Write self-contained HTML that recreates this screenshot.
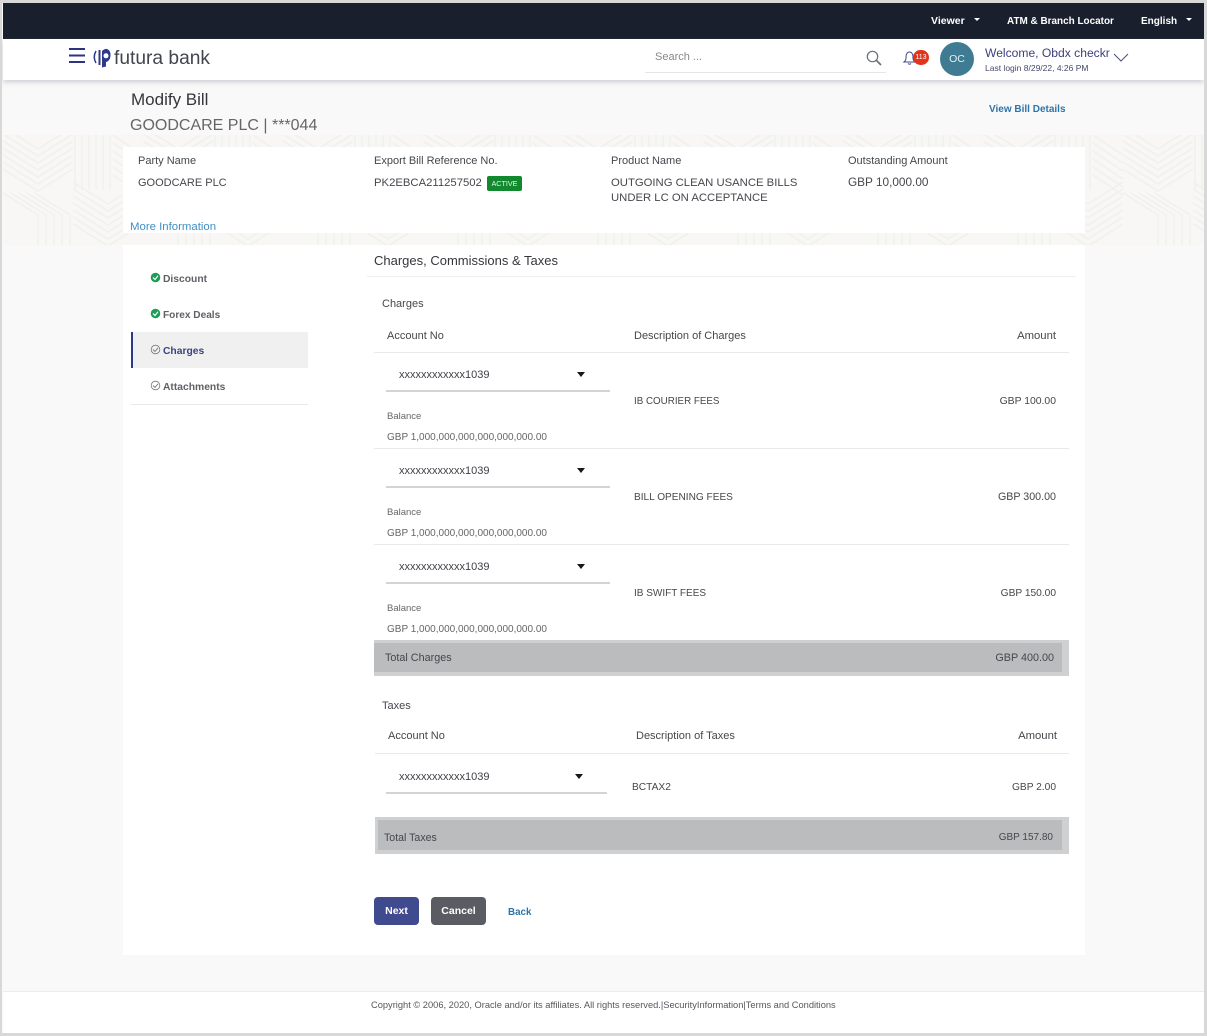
<!DOCTYPE html>
<html><head><meta charset="utf-8"><style>
html,body{margin:0;padding:0}
body{width:1207px;height:1036px;position:relative;overflow:hidden;background:#fff;font-family:"Liberation Sans",sans-serif;color:#3f4147}
.a{position:absolute}
.t{position:absolute;white-space:nowrap;font-size:11px;line-height:14px;color:#45474c}
.r{text-align:right}
.l{position:absolute;height:1px;background:#e9e9e9}
.u{position:absolute;height:2px;background:#d4d4d4}
.c{position:absolute;width:0;height:0;border-left:4.5px solid transparent;border-right:4.5px solid transparent;border-top:5px solid #16181d}
.w{position:absolute;width:0;height:0;border-left:3.5px solid transparent;border-right:3.5px solid transparent;border-top:3.5px solid #fff}
.v{font-size:10.2px}
</style></head><body>
<div class="a" style="left:0;top:0;width:1207px;height:1036px;background:#f9f9f9"></div>
<svg class="a" style="left:3px;top:135px" width="1201" height="110"><defs><pattern id="p" width="140" height="110" patternUnits="userSpaceOnUse"><rect width="140" height="110" fill="#f8f7f5"/><g fill="none" stroke="#f1f0ed" stroke-width="1.500"><path d="M0 -8L35 14L70 -8M0 -1L35 21L70 -1M0 6L35 28L70 6M0 13L35 35L70 13M0 20L35 42L70 20M0 27L35 49L70 27M0 34L35 56L70 34"/><path d="M72 0V55M79 0V55M86 0V55M93 0V55M100 0V55M107 0V55"/><path d="M110 0L140 20M110 8L140 28M110 16L140 36M110 24L140 44M110 32L140 52M110 40L140 60"/><path d="M0 58L35 80V110M8 58L43 80V110M16 58L51 80V110M24 58L59 80V110M32 58L67 80V110"/><path d="M70 47L105 69L140 47M70 54L105 76L140 54M70 61L105 83L140 61M70 68L105 90L140 68M70 75L105 97L140 75M70 82L105 104L140 82M70 89L105 111L140 89"/></g></pattern></defs><rect width="1201" height="110" fill="url(#p)"/></svg>
<div class="a" style="left:123px;top:147px;width:962px;height:86px;background:#fff"></div>
<div class="a" style="left:123px;top:245px;width:962px;height:710px;background:#fff"></div>
<div class="a" style="left:3px;top:991px;width:1201px;height:42px;background:#fff;border-top:1px solid #ececec;box-sizing:border-box"></div>
<div class="a" style="left:3px;top:3px;width:1201px;height:36px;background:#1a1f2e"></div>
<div class="a" style="left:3px;top:39px;width:1201px;height:41px;background:#fff;box-shadow:0 2px 5px rgba(120,120,140,.35)"></div>
<div class="a" style="left:0;top:0;width:1207px;height:1036px;box-sizing:border-box;border:3px solid #d8d8d8;border-width:3px 3px 3px 2.5px"></div>

<span class="t" style="left:931px;top:14px;color:#fff;font-weight:bold;font-size:10.5px">Viewer</span><i class="w" style="left:974px;top:18px"></i>
<span class="t" style="left:1007px;top:15px;color:#fff;font-weight:bold;font-size:9.95px">ATM &amp; Branch Locator</span>
<span class="t" style="left:1141px;top:15px;color:#fff;font-weight:bold;font-size:10px">English</span><i class="w" style="left:1186px;top:18px"></i>

<svg class="a" style="left:68px;top:47px" width="18" height="18"><path d="M1 2H17M1 8.500H17M1 15H17" stroke="#2d3383" stroke-width="2"/></svg>
<svg class="a" style="left:92px;top:47px" width="22" height="22"><path d="M4 4Q0.500 10 4 16" fill="none" stroke="#2d3a8c" stroke-width="1.500"/><path d="M7.500 3V18" stroke="#2d3a8c" stroke-width="2"/><path d="M10 4Q13 1.500 15 2Q19 3.500 18.500 9Q18 14 14 15V19.500L10 20.500Z" fill="#2d3a8c"/><circle cx="14" cy="8.800" r="2.500" fill="#fff"/></svg>
<span class="t" style="left:114px;top:47px;font-size:19.2px;line-height:24px;color:#42454e">futura bank</span>
<span class="t" style="left:655px;top:50px;color:#888">Search ...</span>
<div class="l" style="left:645px;top:72px;width:241px;background:#e6e6e6"></div>
<svg class="a" style="left:865px;top:49px" width="18" height="18"><circle cx="7.500" cy="7.500" r="5.200" fill="none" stroke="#666e78" stroke-width="1.200"/><path d="M11.500 11.500L16 16" stroke="#666e78" stroke-width="1.600"/></svg>
<svg class="a" style="left:902px;top:50px" width="14" height="16"><path d="M2 12Q4.500 10 4 6.500Q4.500 2 7.500 2Q10.500 2 11 6.500Q10.500 10 13 12Z" fill="none" stroke="#3d4a8a" stroke-width="1"/><path d="M6 13.500Q7.500 15 9 13.500" fill="none" stroke="#3d4a8a"/></svg>
<div class="a" style="left:913px;top:50px;width:16px;height:15px;border-radius:8px;background:#e0341c;color:#fff;font-size:7px;line-height:15px;text-align:center">113</div>
<div class="a" style="left:940px;top:42px;width:34px;height:34px;border-radius:50%;background:#3f7c93;color:#e8f0f3;font-size:10.500px;line-height:35px;text-align:center">OC</div>
<span class="t" style="left:985px;top:45px;font-size:12.1px;line-height:16px;color:#3c3f7a">Welcome, Obdx checkr</span>
<span class="t" style="left:985px;top:62px;font-size:8.500px;line-height:12px;color:#44476e">Last login 8/29/22, 4:26 PM</span>
<svg class="a" style="left:1113px;top:52px" width="16" height="11"><path d="M1 2L8 9L15 2" fill="none" stroke="#4a5080" stroke-width="1"/></svg>

<span class="t" style="left:131px;top:89px;font-size:17px;line-height:22px;color:#34363b">Modify Bill</span>
<span class="t" style="left:130px;top:115px;font-size:16px;line-height:22px;color:#666">GOODCARE PLC | ***044</span>
<span class="t" style="left:989px;top:103px;font-size:10px;font-weight:bold;color:#2f74a8">View Bill Details</span>

<span class="t" style="left:138px;top:154px">Party Name</span>
<span class="t" style="left:138px;top:176px">GOODCARE PLC</span>
<span class="t" style="left:374px;top:154px">Export Bill Reference No.</span>
<span class="t" style="left:374px;top:176px;font-size:11.3px">PK2EBCA211257502</span>
<div class="a" style="left:487px;top:176px;width:35px;height:15px;background:#12892f;border-radius:2px;color:#e6f5e9;font-size:7.200px;line-height:15px;text-align:center">ACTIVE</div>
<span class="t" style="left:611px;top:154px">Product Name</span>
<span class="t" style="left:611px;top:176px;font-size:11.3px">OUTGOING CLEAN USANCE BILLS</span>
<span class="t" style="left:611px;top:191px;font-size:11.3px">UNDER LC ON ACCEPTANCE</span>
<span class="t" style="left:848px;top:154px">Outstanding Amount</span>
<span class="t" style="left:848px;top:175px;font-size:11.8px">GBP 10,000.00</span>
<span class="t" style="left:130px;top:220px;font-size:11.400px;color:#3f8fc4">More Information</span>

<div class="a" style="left:131px;top:332px;width:177px;height:36px;background:#f0f0f0"></div>
<div class="a" style="left:131px;top:332px;width:2px;height:36px;background:#2d3a8c"></div>
<div class="l" style="left:131px;top:404px;width:177px"></div>
<svg class="a" style="left:150px;top:272px" width="11" height="11"><circle cx="5.500" cy="5.500" r="4.800" fill="#1f9d55"/><path d="M3 5.500L5 7.500L8 3.800" fill="none" stroke="#fff" stroke-width="1.200"/></svg>
<svg class="a" style="left:150px;top:308px" width="11" height="11"><circle cx="5.500" cy="5.500" r="4.800" fill="#1f9d55"/><path d="M3 5.500L5 7.500L8 3.800" fill="none" stroke="#fff" stroke-width="1.200"/></svg>
<svg class="a" style="left:150px;top:344px" width="11" height="11"><circle cx="5.500" cy="5.500" r="4.300" fill="none" stroke="#777" stroke-width=".8"/><path d="M3 5.500L5 7.500L8 3.800" fill="none" stroke="#777" stroke-width=".9"/></svg>
<svg class="a" style="left:150px;top:380px" width="11" height="11"><circle cx="5.500" cy="5.500" r="4.300" fill="none" stroke="#777" stroke-width=".8"/><path d="M3 5.500L5 7.500L8 3.800" fill="none" stroke="#777" stroke-width=".9"/></svg>
<span class="t" style="left:163px;top:273px;font-weight:bold;font-size:10.300px;color:#5f6166">Discount</span>
<span class="t" style="left:163px;top:309px;font-weight:bold;font-size:10.100px;color:#5f6166">Forex Deals</span>
<span class="t" style="left:163px;top:345px;font-weight:bold;font-size:10.300px;color:#3a4480">Charges</span>
<span class="t" style="left:163px;top:381px;font-weight:bold;font-size:10.300px;color:#5f6166">Attachments</span>

<span class="t" style="left:374px;top:253px;font-size:13px;line-height:16px;color:#34363b">Charges, Commissions &amp; Taxes</span>
<div class="l" style="left:367px;top:276px;width:709px;background:#eee"></div>
<span class="t" style="left:382px;top:297px">Charges</span>
<span class="t" style="left:387px;top:329px">Account No</span>
<span class="t" style="left:634px;top:329px">Description of Charges</span>
<span class="t r" style="right:151px;top:329px;font-size:11.300px">Amount</span>
<div class="l" style="left:374px;top:352px;width:695px"></div>

<span class="t" style="left:399px;top:368px;color:#3f4147">xxxxxxxxxxxx1039</span><i class="c" style="left:577px;top:372px"></i>
<div class="u" style="left:386px;top:390px;width:224px"></div>
<span class="t" style="left:387px;top:410px;font-size:9.500px;color:#666">Balance</span>
<span class="t" style="left:387px;top:431px;font-size:10px;color:#666">GBP 1,000,000,000,000,000,000.00</span>
<span class="t" style="left:634px;top:395px;font-size:9.800px">IB COURIER FEES</span>
<span class="t r" style="right:151px;top:395px;font-size:10.400px">GBP 100.00</span>
<div class="l" style="left:374px;top:448px;width:695px"></div>

<span class="t" style="left:399px;top:464px;color:#3f4147">xxxxxxxxxxxx1039</span><i class="c" style="left:577px;top:468px"></i>
<div class="u" style="left:386px;top:486px;width:224px"></div>
<span class="t" style="left:387px;top:506px;font-size:9.500px;color:#666">Balance</span>
<span class="t" style="left:387px;top:527px;font-size:10px;color:#666">GBP 1,000,000,000,000,000,000.00</span>
<span class="t" style="left:634px;top:491px;font-size:10.100px">BILL OPENING FEES</span>
<span class="t r" style="right:151px;top:490px;font-size:10.700px">GBP 300.00</span>
<div class="l" style="left:374px;top:544px;width:695px"></div>

<span class="t" style="left:399px;top:560px;color:#3f4147">xxxxxxxxxxxx1039</span><i class="c" style="left:577px;top:564px"></i>
<div class="u" style="left:386px;top:582px;width:224px"></div>
<span class="t" style="left:387px;top:602px;font-size:9.500px;color:#666">Balance</span>
<span class="t" style="left:387px;top:623px;font-size:10px;color:#666">GBP 1,000,000,000,000,000,000.00</span>
<span class="t" style="left:634px;top:587px;font-size:10px">IB SWIFT FEES</span>
<span class="t r" style="right:151px;top:587px;font-size:10.200px">GBP 150.00</span>

<div class="a" style="left:374px;top:640px;width:695px;height:36px;background:#bbbcbd;box-sizing:border-box;border:solid #cfd0d1;border-width:3px 7px 4px 0"></div>
<span class="t" style="left:385px;top:651px;font-size:10.800px">Total Charges</span>
<span class="t r" style="right:153px;top:651px;font-size:10.800px">GBP 400.00</span>

<span class="t" style="left:382px;top:699px">Taxes</span>
<span class="t" style="left:388px;top:729px">Account No</span>
<span class="t" style="left:636px;top:729px">Description of Taxes</span>
<span class="t r" style="right:150px;top:729px;font-size:11.300px">Amount</span>
<div class="l" style="left:375px;top:753px;width:694px"></div>
<span class="t" style="left:399px;top:770px;color:#3f4147">xxxxxxxxxxxx1039</span><i class="c" style="left:575px;top:774px"></i>
<div class="u" style="left:386px;top:792px;width:221px"></div>
<span class="t v" style="left:632px;top:781px">BCTAX2</span>
<span class="t r" style="right:151px;top:781px;font-size:10.200px">GBP 2.00</span>

<div class="a" style="left:375px;top:817px;width:694px;height:37px;background:#bbbcbd;box-sizing:border-box;border:solid #cfd0d1;border-width:3px 7px 4px 3px"></div>
<span class="t" style="left:384px;top:831px;font-size:10.600px">Total Taxes</span>
<span class="t r" style="right:154px;top:831px;font-size:10px">GBP 157.80</span>

<div class="a" style="left:374px;top:897px;width:45px;height:28px;border-radius:4px;background:#3f4a8f;color:#fff;font-weight:bold;font-size:10.500px;line-height:29px;text-align:center">Next</div>
<div class="a" style="left:431px;top:897px;width:55px;height:28px;border-radius:4px;background:#595c62;color:#fff;font-weight:bold;font-size:10.500px;line-height:29px;text-align:center">Cancel</div>
<span class="t" style="left:508px;top:906px;font-size:9.800px;font-weight:bold;color:#2f74a8">Back</span>

<span class="t" style="left:371px;top:998px;font-size:9.300px;color:#55575c">Copyright © 2006, 2020, Oracle and/or its affiliates. All rights reserved.|SecurityInformation|Terms and Conditions</span>
</body></html>
